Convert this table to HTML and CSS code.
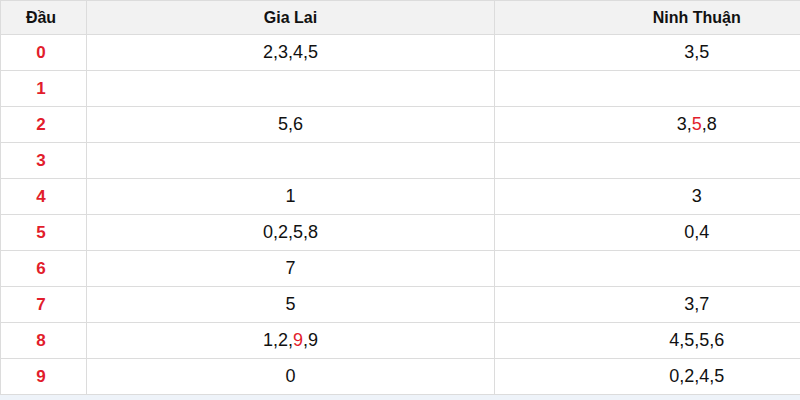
FILE: index.html
```html
<!DOCTYPE html>
<html>
<head>
<meta charset="utf-8">
<link rel="stylesheet" href="styles.css">
</head>
<body>
<table class="kq">
  <colgroup><col class="c1"><col class="c2"><col class="c3"></colgroup>
  <thead>
    <tr><th class="dau-h">Đầu</th><th>Gia Lai</th><th class="nt">Ninh Thuận</th></tr>
  </thead>
  <tbody>
    <tr><td class="dau">0</td><td>2,3,4,5</td><td class="nt">3,5</td></tr>
    <tr><td class="dau">1</td><td></td><td class="nt"></td></tr>
    <tr><td class="dau">2</td><td>5,6</td><td class="nt">3,<span class="red">5</span>,8</td></tr>
    <tr><td class="dau">3</td><td></td><td class="nt"></td></tr>
    <tr><td class="dau">4</td><td>1</td><td class="nt">3</td></tr>
    <tr><td class="dau">5</td><td>0,2,5,8</td><td class="nt">0,4</td></tr>
    <tr><td class="dau">6</td><td>7</td><td class="nt"></td></tr>
    <tr><td class="dau">7</td><td>5</td><td class="nt">3,7</td></tr>
    <tr><td class="dau">8</td><td>1,2,<span class="red">9</span>,9</td><td class="nt">4,5,5,6</td></tr>
    <tr><td class="dau">9</td><td>0</td><td class="nt">0,2,4,5</td></tr>
  </tbody>
</table>
</body>
</html>
```

FILE: styles.css
```css
html, body {
  margin: 0;
  padding: 0;
  background: #eef3f9;
  font-family: "Liberation Sans", Arial, sans-serif;
  color: #111;
}
.kq {
  width: 800px;
  border-collapse: collapse;
  table-layout: fixed;
  background: #fff;
}
.c1 { width: 86px; }
.c2 { width: 408px; }
.c3 { width: 306px; }
.kq th, .kq td {
  border: 1px solid #dcdcdc;
  text-align: center;
  padding: 0;
}
.kq th:last-child, .kq td:last-child {
  border-right: 0;
}
.kq th {
  height: 33px;
  background: #f2f2f2;
  font-weight: bold;
  font-size: 16px;
}
.kq td {
  height: 35px;
  font-size: 18px;
}
.kq .dau-h,
.kq td.dau {
  padding-right: 5px;
}
.kq .nt {
  padding-left: 98px;
}
.kq td.dau {
  color: #e21d2c;
  font-weight: bold;
  font-size: 17px;
}
.red { color: #e21d2c; }
```
